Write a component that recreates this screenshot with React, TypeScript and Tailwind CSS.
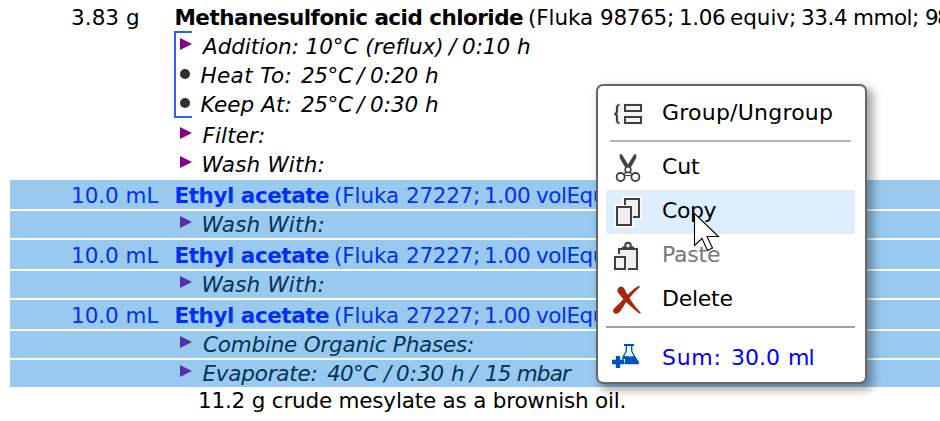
import React from "react";

type Face = "regular" | "italic" | "bold" | "menu";

/** A stretch of text whose ink begins at `x` and is tracked to `w` pixels. */
type Run = { t: string; x: number; w: number; face?: Face };

const faceClass: Record<Face, string> = {
  regular: "font-['DejaVu_Sans',sans-serif] text-[21.5px]",
  italic: "font-['DejaVu_Sans',sans-serif] text-[21.5px] italic",
  bold: "font-['DejaVu_Sans',sans-serif] text-[21.5px] font-bold",
  menu: "font-['DejaVu_Sans',sans-serif] text-[22px]",
};

const faceFont: Record<Face, string> = {
  regular: '21.5px "DejaVu Sans"',
  italic: 'italic 21.5px "DejaVu Sans"',
  bold: 'bold 21.5px "DejaVu Sans"',
  menu: '22px "DejaVu Sans"',
};

const ctx = document.createElement("canvas").getContext("2d")!;

function track(text: string, face: Face, width: number) {
  ctx.font = faceFont[face];
  const m = ctx.measureText(text);
  const ink = m.actualBoundingBoxRight + m.actualBoundingBoxLeft;
  const spacing = text.length > 1 ? (width - ink) / (text.length - 1) : 0;
  return { spacing, bearing: -m.actualBoundingBoxLeft };
}

function Line({ runs, from }: { runs: Run[]; from: number }) {
  return (
    <div className="flex whitespace-pre leading-7">
      {runs.map((r, i) => {
        const face = r.face ?? "regular";
        const { spacing, bearing } = track(r.t, face, r.w);
        const left = i === 0 ? r.x - from : 0;
        const next = runs[i + 1];
        return (
          <span
            key={i}
            className={`block shrink-0 ${faceClass[face]}`}
            style={{
              letterSpacing: spacing,
              marginLeft: left,
              textIndent: -bearing,
              width: next ? next.x - r.x : r.w + 4,
            }}
          >
            {r.t}
          </span>
        );
      })}
    </div>
  );
}

function Triangle() {
  return (
    <svg width="12" height="12" viewBox="0 0 12 12" fill="currentColor">
      <path d="M0 0L12 6L0 12Z" />
    </svg>
  );
}

function Step({ runs, dot, selected }: { runs: Run[]; dot?: boolean; selected?: boolean }) {
  return (
    <div className={`flex h-[29px] pl-[170px] ${selected ? "text-[#003355]" : "text-black"}`}>
      <div
        className={`w-5 shrink-0 ${dot ? "pt-[7px] text-[#303030]" : selected ? "pt-[5px] text-[#5530aa]" : "pt-[5px] text-[#880088]"}`}
      >
        {dot ? <div className="size-2.5 rounded-full bg-[#303030]" /> : <Triangle />}
      </div>
      <Line from={201} runs={runs.map((r) => ({ face: "italic" as Face, ...r }))} />
    </div>
  );
}

function Material({ runs, selected }: { runs: Run[]; selected?: boolean }) {
  return (
    <div className={`h-[31px] pt-0.5 ${selected ? "text-[#0030f0]" : "text-black"}`}>
      <Line from={10} runs={runs} />
    </div>
  );
}

const acetate: Run[] = [
  { t: "10.0 mL", x: 73, w: 85.5 },
  { t: "Ethyl acetate", x: 175.5, w: 153.5, face: "bold" },
  { t: "(Fluka", x: 335, w: 63 },
  { t: "27227;", x: 407, w: 71 },
  { t: "1.00", x: 486, w: 44 },
  { t: "volEquiv)", x: 536, w: 94.5 },
];

const washWith: Run[] = [{ t: "Wash With:", x: 204.5, w: 120 }];

function SelectedMaterial({ runs }: { runs: Run[] }) {
  return (
    <div className="h-[31px] overflow-hidden border-b-2 border-white bg-[#9ac9ef]">
      <Material selected runs={runs} />
    </div>
  );
}

function SelectedStep({ runs, last }: { runs: Run[]; last?: boolean }) {
  return (
    <div className={`overflow-hidden bg-[#9ac9ef] ${last ? "h-[27px]" : "h-[29px] border-b-2 border-white"}`}>
      <Step selected runs={runs} />
    </div>
  );
}

const INK = "#404040";

function GroupIcon() {
  return (
    <svg width="44" height="44" fill="none" stroke={INK}>
      <rect x="8" y="11" width="29" height="22" fill="#f4f4f4" stroke="none" />
      <path d="M13.5 13C11 13 11 14 11 16V19C11 21 10.3 22 8.3 22C10.3 22 11 23 11 25V28C11 30 11 31 13.5 31" strokeWidth="2.1" />
      <rect x="19" y="13" width="16" height="6" strokeWidth="2" />
      <rect x="19" y="25" width="16" height="6" strokeWidth="2" />
    </svg>
  );
}

function CutIcon() {
  return (
    <svg width="44" height="44" fill="none" stroke={INK}>
      <path d="M14.3 8.5C13.3 11 14.3 13 20.2 22.2L22.8 20.4L15.7 8.8ZM29.7 8.5C30.7 11 29.7 13 23.8 22.2L21.2 20.4L28.3 8.8Z" fill={INK} strokeWidth="0.8" />
      <circle cx="22" cy="23.7" r="2.9" fill="#f4f4f4" strokeWidth="1.5" />
      <path d="M20.3 26L18.3 28M23.7 26L25.7 28" strokeWidth="1.5" />
      <circle cx="14.6" cy="31" r="4" strokeWidth="1.8" />
      <circle cx="29.4" cy="31" r="4" strokeWidth="1.8" />
      <path d="M18.5 29.5H25.5" strokeWidth="1.2" />
    </svg>
  );
}

function CopyIcon() {
  return (
    <svg width="44" height="44" stroke={INK} strokeWidth="2" fill="#f0f0f3">
      <path d="M17 7H35V29H28V37H9V15H17Z" stroke="#f7f7f7" />
      <path d="M19 15V9H33V27H27" />
      <rect x="11" y="17" width="14" height="18" />
    </svg>
  );
}

function PasteIcon() {
  return (
    <svg width="44" height="44" stroke={INK} strokeWidth="2" fill="none">
      <path d="M12 12H17L19 7H25L27 12H33V36H7V21H12Z" fill="#f0f0f3" stroke="#f7f7f7" />
      <path d="M13 20V15H31V35H22" />
      <path d="M16 15V12.5H28V15Z" fill={INK} stroke="none" />
      <circle cx="22" cy="11.6" r="2.8" strokeWidth="1.9" fill="#f0f0f3" />
      <rect x="9" y="23" width="10" height="12" />
    </svg>
  );
}

function DeleteIcon() {
  return (
    <svg width="44" height="44" fill="#a82510">
      <path d="M12 10.5C14 7.3 17.5 8.6 18.5 11C22 18 27 26.5 35 35L33 35.5C25 29 18 22.5 12.3 15C11.2 13.5 11 12 12 10.5Z" />
      <path d="M33 8L34 9C26 16 20.5 23 16.8 29.5C15.5 32 13.2 35.5 10.3 35.8C7 36 6.2 32.5 8.3 30.3C16 23.5 23.5 13.5 31 8.8Z" />
    </svg>
  );
}

function FlaskIcon() {
  return (
    <svg width="44" height="44" fill="#0055bb">
      <path d="M20.3 8V14L16.8 20.5V26H32L25.7 14V8Z" fill="#f3f7fb" stroke="#0055bb" strokeWidth="1.3" />
      <rect x="18" y="7" width="10" height="2" />
      <path d="M17.5 19.5C21 18 23 20.8 28.8 18.8L33.2 25.2Q33.2 27.3 32 27.3H19V22H17Z" />
      <path d="M9.8 19H14.2V22.8H18V27.2H14.2V31H9.8V27.2H6V22.8H9.8Z" />
    </svg>
  );
}

function MenuItem({ icon, runs, tone }: { icon: React.ReactNode; runs: Run[]; tone?: "hover" | "disabled" | "link" }) {
  const toneClass =
    tone === "hover"
      ? "bg-[#ddeeff] text-black shadow-[inset_0_0_0_1.5px_#ebebeb]"
      : tone === "disabled"
        ? "text-[#777777]"
        : tone === "link"
          ? "text-[#0000f5]"
          : "text-black";
  return (
    <div className={`mx-2 flex h-11 w-[249px] ${toneClass}`}>
      {icon}
      <div className="pt-[7px]">
        <Line from={650} runs={runs.map((r) => ({ face: "menu" as Face, ...r }))} />
      </div>
    </div>
  );
}

function ContextMenu() {
  return (
    <div className="absolute left-[596px] top-[84px] h-[300px] w-[271px] rounded-[7px] border-2 border-[#666666] bg-white pt-1.5 shadow-[5px_5px_10px_1px_rgba(0,0,0,0.36)]">
      <MenuItem icon={<GroupIcon />} runs={[{ t: "Group/Ungroup", x: 663, w: 169 }]} />
      <div className="mx-3 my-1 h-0.5 w-[241px] bg-[#b2b6c0]" />
      <MenuItem icon={<CutIcon />} runs={[{ t: "Cut", x: 663, w: 37 }]} />
      <MenuItem icon={<CopyIcon />} tone="hover" runs={[{ t: "Copy", x: 663, w: 53.5 }]} />
      <MenuItem icon={<PasteIcon />} tone="disabled" runs={[{ t: "Paste", x: 664, w: 56 }]} />
      <MenuItem icon={<DeleteIcon />} runs={[{ t: "Delete", x: 664, w: 68.5 }]} />
      <div className="mx-2 mb-[9px] mt-1 h-0.5 w-[249px] bg-[#a0a0a0]" />
      <MenuItem
        icon={<FlaskIcon />}
        tone="link"
        runs={[
          { t: "Sum:", x: 663, w: 55.5 },
          { t: "30.0", x: 732, w: 47 },
          { t: "ml", x: 790, w: 23.5 },
        ]}
      />
    </div>
  );
}

export default function App() {
  return (
    <div className="relative h-[421px] w-[940px] overflow-hidden bg-white pl-2.5 pt-0.5">
      <Material
        runs={[
          { t: "3.83 g", x: 72, w: 66 },
          { t: "Methanesulfonic acid chloride", x: 175.5, w: 347.5, face: "bold" },
          { t: "(Fluka", x: 529, w: 63 },
          { t: "98765;", x: 601, w: 71 },
          { t: "1.06", x: 681, w: 44 },
          { t: "equiv;", x: 731, w: 63 },
          { t: "33.4", x: 802, w: 45 },
          { t: "mmol;", x: 854, w: 63 },
          { t: "98", x: 926, w: 24 },
        ]}
      />
      <div className="relative">
        <Step
          runs={[
            { t: "Addition: 10°C (reflux)", x: 202, w: 241.5 },
            { t: "/", x: 448, w: 10 },
            { t: "0:10 h", x: 464, w: 67 },
          ]}
        />
        <Step
          dot
          runs={[
            { t: "Heat To:", x: 201.5, w: 90 },
            { t: "25°C", x: 302, w: 52 },
            { t: "/", x: 356, w: 10 },
            { t: "0:20 h", x: 372, w: 67 },
          ]}
        />
        <Step
          dot
          runs={[
            { t: "Keep At:", x: 201.5, w: 90 },
            { t: "25°C", x: 302, w: 52 },
            { t: "/", x: 356, w: 10 },
            { t: "0:30 h", x: 372, w: 67 },
          ]}
        />
        <div className="absolute -top-0.5 left-[164px] h-[87px] w-[18px] border-y-2 border-l-2 border-[#2b62f5]" />
      </div>
      <div className="pt-0.5">
        <Step runs={[{ t: "Filter:", x: 203.5, w: 61.5 }]} />
        <Step runs={washWith} />
      </div>
      <SelectedMaterial runs={acetate} />
      <SelectedStep runs={washWith} />
      <SelectedMaterial runs={acetate} />
      <SelectedStep runs={washWith} />
      <SelectedMaterial runs={acetate} />
      <SelectedStep runs={[{ t: "Combine Organic Phases:", x: 204, w: 270 }]} />
      <SelectedStep
        last
        runs={[
          { t: "Evaporate:", x: 203.5, w: 114 },
          { t: "40°C", x: 328, w: 51 },
          { t: "/", x: 383, w: 10 },
          { t: "0:30 h", x: 398, w: 67 },
          { t: "/", x: 469, w: 10 },
          { t: "15 mbar", x: 487, w: 86 },
        ]}
      />
      <Line from={10} runs={[{ t: "11.2 g crude mesylate as a brownish oil.", x: 200, w: 424.5 }]} />
      <ContextMenu />
      <svg className="absolute left-[692px] top-[210px]" width="30" height="42" fill="white" stroke="black" strokeWidth="1.1">
        <path d="M2.5 3.5V35.5L10 28.5L15.5 40.5L20.5 38L15 26.5H26.5Z" />
      </svg>
    </div>
  );
}
